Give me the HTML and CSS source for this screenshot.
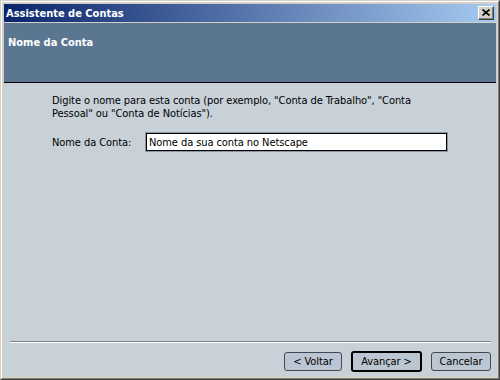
FILE: index.html
```html
<!DOCTYPE html>
<html lang="pt">
<head>
<meta charset="utf-8">
<title>Assistente de Contas</title>
<link rel="stylesheet" href="styles.css">
</head>
<body>
<div class="window">
  <div class="frame">
    <div class="titlebar">
      <span class="title">Assistente de Contas</span>
      <button class="close" aria-label="Fechar">
        <svg width="8" height="7" viewBox="0 0 8 7"><path d="M0.5 0.5 L7.5 6.5 M7.5 0.5 L0.5 6.5" stroke="#000" stroke-width="1.6" fill="none"/></svg>
      </button>
    </div>
    <div class="header">
      <h1 class="header-title">Nome da Conta</h1>
    </div>
    <div class="content">
      <div class="main">
        <p class="intro">Digite o nome para esta conta (por exemplo, "Conta de Trabalho", "Conta<br>Pessoal" ou "Conta de Notícias").</p>
        <div class="field">
          <label class="field-label" for="acct">Nome da Conta:</label>
          <input class="field-input" id="acct" type="text" value="Nome da sua conta no Netscape">
        </div>
      </div>
      <div class="footer">
        <div class="sep"></div>
        <div class="buttons">
          <button class="btn btn-back">&lt; Voltar</button>
          <button class="btn btn-next btn-default">Avançar &gt;</button>
          <button class="btn btn-cancel">Cancelar</button>
        </div>
      </div>
    </div>
  </div>
</div>
</body>
</html>
```

FILE: styles.css
```css
* { box-sizing: border-box; }

html, body {
  margin: 0;
  padding: 0;
  background: #d4d0c8;
}

body {
  font-family: "DejaVu Sans Condensed", "DejaVu Sans", sans-serif;
  font-size: 11px;
  color: #000;
}

.window {
  width: 500px;
  height: 380px;
  background: #d4d0c8;
  border: 1px solid;
  border-color: #d4d0c8 #404040 #404040 #d4d0c8;
  display: flex;
}

.frame {
  flex: 1;
  display: flex;
  flex-direction: column;
  border: 1px solid;
  border-color: #ffffff #808080 #808080 #ffffff;
  padding: 2px;
}

.titlebar {
  height: 18px;
  margin-bottom: 1px;
  background: linear-gradient(to right, #0a246a, #a6caf0);
  display: flex;
  align-items: center;
  justify-content: space-between;
  padding: 0 2px 0 2px;
}

.title {
  color: #fff;
  font-weight: bold;
  font-size: 11px;
  line-height: 18px;
  padding-top: 1px;
}

.close {
  width: 16px;
  height: 14px;
  padding: 0;
  margin: 0;
  background: #d4d0c8;
  border: 1px solid;
  border-color: #ffffff #404040 #404040 #ffffff;
  box-shadow: inset -1px -1px 0 #808080;
  display: flex;
  align-items: center;
  justify-content: center;
}

.close svg { display: block; margin-left: -1px; margin-top: -1px; }

.header {
  height: 60px;
  background: #5a7691;
  border-bottom: 1px solid #000;
  padding: 13px 4px 0 4px;
}

.header-title {
  margin: 0;
  color: #fff;
  font-size: 11px;
  font-weight: bold;
  line-height: 14px;
}

.content {
  flex: 1;
  background: #c8d0d8;
  display: flex;
  flex-direction: column;
  letter-spacing: -0.08px;
}

.main {
  flex: 1;
  padding: 11px 0 0 48px;
}

.intro {
  margin: 0;
  line-height: 13px;
}

.field {
  display: flex;
  align-items: center;
  margin-top: 13px;
}

.field-label {
  width: 94px;
}

.field-input {
  width: 301px;
  height: 18px;
  margin: 0;
  padding: 0 0 0 2px;
  border: 1px solid #000;
  box-shadow: 0 0 0 1px #8d97a3;
  background: #fff;
  font: inherit;
  letter-spacing: -0.08px;
  color: #000;
  outline: none;
}

.footer {
  display: flex;
  flex-direction: column;
}

.sep {
  height: 2px;
  margin: 0 5px 0 6px;
  border-top: 1px solid #7a8490;
  border-bottom: 1px solid #ffffff;
}

.buttons {
  display: flex;
  justify-content: flex-end;
  align-items: center;
  gap: 9px;
  padding: 8px 5px 4px 0;
}

.btn {
  height: 19px;
  margin: 1px 0;
  padding: 0;
  border: 1px solid #404850;
  border-radius: 3px;
  background: #bcc6d2;
  font: inherit;
  letter-spacing: -0.08px;
  color: #000;
  line-height: 15px;
}

.btn-back { width: 58px; }
.btn-next { width: 71px; }
.btn-cancel { width: 60px; }

.btn-default {
  height: 21px;
  margin: 0;
  border: 2px solid #000;
}
```
